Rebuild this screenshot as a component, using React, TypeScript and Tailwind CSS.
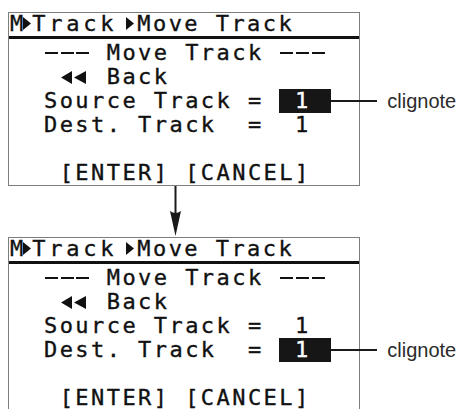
import React from 'react'

// LCD screen mock: two states of the "Move Track" page, linked by an arrow
const lcd = { fontFamily: '"DejaVu Sans Mono", "Liberation Mono", monospace' }

function RightTri() {
  return (
    <svg width="8" height="13" viewBox="0 0 8 13">
      <polygon points="0,0 8,6.5 0,13" fill="#111" />
    </svg>
  )
}

function BackTris() {
  return (
    <svg width="26" height="13" viewBox="0 0 26 13">
      <polygon points="11,0 0,6.5 11,13" fill="#111" />
      <polygon points="25,0 13,6.5 25,13" fill="#111" />
    </svg>
  )
}

// the LCD's dashes are nearly a full cell wide
function Dashes() {
  return (
    <span className="inline-flex align-top items-center h-[24px] w-[47.04px] gap-[2.68px] pl-[1px]">
      <span className="block w-[13px] h-[2.5px] bg-[#111]" />
      <span className="block w-[13px] h-[2.5px] bg-[#111]" />
      <span className="block w-[13px] h-[2.5px] bg-[#111]" />
    </span>
  )
}

function Callout() {
  return (
    <span className="absolute left-full top-0 h-full flex items-center [-webkit-text-stroke:0px]">
      <span className="block w-[46px] h-[1.5px] bg-[#1a1a1a]" />
      <span
        className="ml-[10px] whitespace-nowrap text-[20px] leading-none text-[#2b2b2b] tracking-normal"
        style={{ fontFamily: '"Liberation Sans", Arial, sans-serif' }}
      >
        clignote
      </span>
    </span>
  )
}

function Value() {
  return (
    <span className="relative inline-block align-top w-[52px] h-[24px] bg-[#161616] text-white pl-[15.68px] [-webkit-text-stroke:0.35px_#fff]">
      1
      <Callout />
    </span>
  )
}

function Screen({ blink }: { blink: 'source' | 'dest' }) {
  return (
    <div
      className="w-[352px] border border-[#7d7d7d] bg-white text-[#111] [-webkit-text-stroke:0.35px_#111]"
      style={lcd}
    >
      <div className="h-[23px] pl-[1px] flex items-start text-[22px] leading-[21px] whitespace-pre">
        <span>M</span>
        <span className="h-[21px] w-[9px] flex items-center">
          <RightTri />
        </span>
        <span className="tracking-[3.76px]">Track</span>
        <span className="h-[21px] w-[20px] flex items-center pl-[9px]">
          <RightTri />
        </span>
        <span className="tracking-[2.44px]">Move Track</span>
      </div>
      <div className="h-[3px] bg-[#111]" />
      <div className="pt-[2px] pb-[2px] pl-[35px] text-[22px] leading-[24px] tracking-[2.44px] whitespace-pre">
        <div className="h-[24px]">
          <Dashes />
          {' Move Track '}
          <Dashes />
        </div>
        <div className="h-[24px] flex items-start">
          <span className="inline-flex items-center h-[24px] w-[62.72px] pl-[17px]">
            <BackTris />
          </span>
          <span>Back</span>
        </div>
        <div className="h-[24px]">
          {'Source Track = '}
          {blink === 'source' ? <Value /> : <span>{' 1'}</span>}
        </div>
        <div className="h-[24px]">
          {blink === 'dest' ? 'Dest. Track  = ' : 'Dest. Track  ='}
          {blink === 'dest' ? <Value /> : <span>{'  1'}</span>}
        </div>
        <div className="h-[24px]" />
        <div className="h-[22px] pt-[2px] leading-[20px]">{' [ENTER] [CANCEL]'}</div>
      </div>
    </div>
  )
}

export default function App() {
  return (
    <div className="w-[462px] h-[409px] bg-white overflow-hidden">
      <div className="pt-[12px] pl-[8px]">
        <Screen blink="source" />
        <div className="h-[51px] pl-[161px]">
          <svg width="13" height="51" viewBox="0 0 13 51" className="block">
            <rect x="5.5" y="0" width="2" height="30" fill="#1a1a1a" />
            <path d="M1 25 Q6.5 29 12 25 L6.5 50 Z" fill="#1a1a1a" />
          </svg>
        </div>
        <Screen blink="dest" />
      </div>
    </div>
  )
}
